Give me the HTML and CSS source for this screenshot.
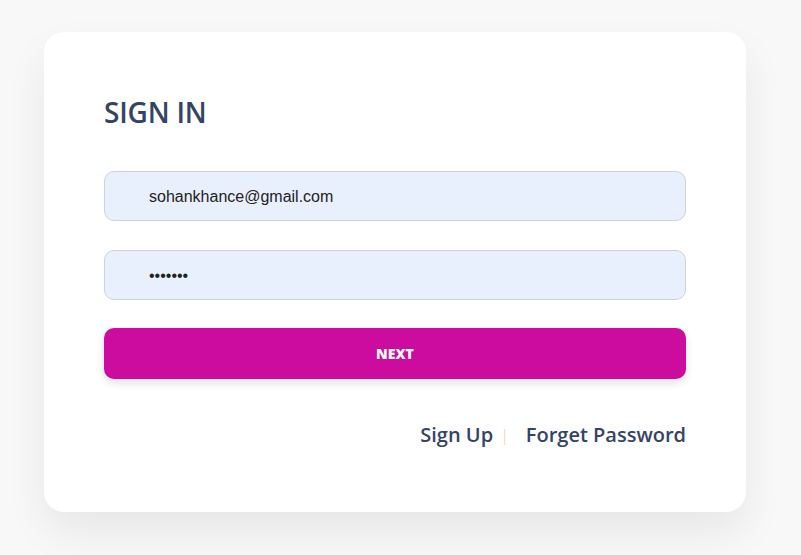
FILE: index.html
```html
<!DOCTYPE html>
<html>
<head>
<meta charset="utf-8">
<link rel="stylesheet" href="styles.css">
</head>
<body>
<div class="page">
  <form class="card">
    <h1 class="title">SIGN IN</h1>
    <div class="field"><input class="input" type="text" value="sohankhance@gmail.com"></div>
    <div class="field"><input class="input" type="password" value="1234567"></div>
    <button class="btn" type="button">NEXT</button>
    <div class="links">
      <a class="link">Sign Up</a>
      <span class="sep">|</span>
      <a class="link">Forget Password</a>
    </div>
  </form>
</div>
</body>
</html>
```
FILE: styles.css
```css
* { box-sizing: border-box; }
html, body { margin: 0; height: 100%; }
body { background: #f8f8f8; font-family: "Open Sans", sans-serif; }
.page { padding: 32px 0 0 44px; }
.card {
  width: 702px;
  height: 480px;
  background: #fff;
  border-radius: 20px;
  box-shadow: 0 20px 40px rgba(0,0,0,0.07);
  padding: 61px 60px 0 60px;
}
.title {
  margin: 0 0 40px 0;
  font-family: "Open Sans", sans-serif;
  font-weight: 600;
  font-size: 28px;
  line-height: 38px;
  color: #344466;
  letter-spacing: -0.2px;
}
.field { margin-bottom: 29px; }
.input {
  display: block;
  width: 582px;
  height: 50px;
  border: 1px solid #ccd2dc;
  border-radius: 10px;
  background: #e8f0fe;
  padding: 2px 0 0 44px;
  font-family: "Liberation Sans", Arial, sans-serif;
  font-size: 16px;
  color: #222;
  outline: none;
}
.field:nth-child(3) { margin-bottom: 28px; }
.btn {
  display: block;
  width: 582px;
  height: 51px;
  border: 0;
  border-radius: 10px;
  background: #cc0c9f;
  color: #fff;
  font-family: "Open Sans", sans-serif;
  font-weight: 800;
  font-size: 14px;
  box-shadow: 0 4px 8px rgba(0,0,0,0.12);
}
.links {
  display: flex;
  justify-content: flex-end;
  align-items: center;
  margin-top: 42px;
  font-family: "Open Sans", sans-serif;
  font-weight: 600;
  font-size: 20px;
  color: #344466;
}
.link { color: #344466; }
.sep { color: #e8d48a; font-size: 16px; font-weight: 300; margin: 0 17px 0 7px; }
```
